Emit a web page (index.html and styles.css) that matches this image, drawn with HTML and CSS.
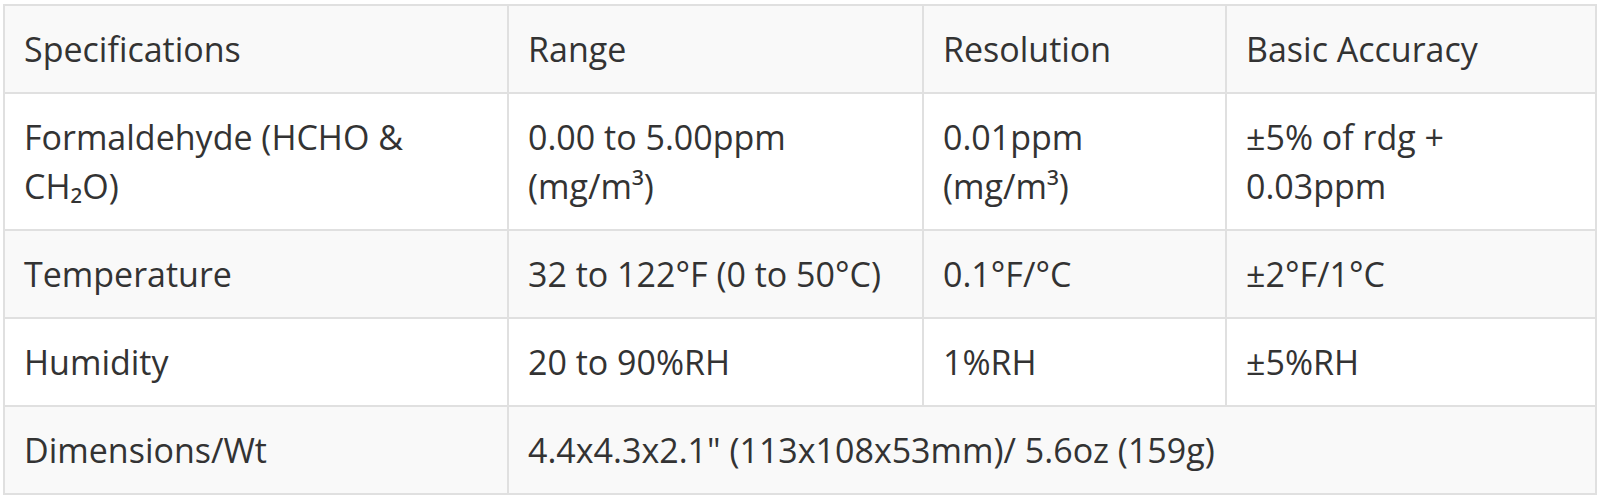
FILE: index.html
```html
<!DOCTYPE html>
<html>
<head>
<meta charset="utf-8">
<link rel="stylesheet" href="styles.css">
</head>
<body>
<table class="spec">
  <colgroup>
    <col class="c1"><col class="c2"><col class="c3"><col class="c4">
  </colgroup>
  <tr class="alt">
    <td>Specifications</td>
    <td>Range</td>
    <td>Resolution</td>
    <td>Basic Accuracy</td>
  </tr>
  <tr>
    <td>Formaldehyde (HCHO &amp; CH₂O)</td>
    <td>0.00 to 5.00ppm (mg/m³)</td>
    <td>0.01ppm (mg/m³)</td>
    <td>±5% of rdg + 0.03ppm</td>
  </tr>
  <tr class="alt">
    <td>Temperature</td>
    <td>32 to 122°F (0 to 50°C)</td>
    <td>0.1°F/°C</td>
    <td>±2°F/1°C</td>
  </tr>
  <tr>
    <td>Humidity</td>
    <td>20 to 90%RH</td>
    <td>1%RH</td>
    <td>±5%RH</td>
  </tr>
  <tr class="alt">
    <td>Dimensions/Wt</td>
    <td colspan="3">4.4x4.3x2.1" (113x108x53mm)/ 5.6oz (159g)</td>
  </tr>
</table>
</body>
</html>
```
FILE: styles.css
```css
html, body {
  margin: 0;
  padding: 0;
  background: #ffffff;
}
body {
  padding: 4px 3px 0 3px;
  font-family: "Open Sans", "Liberation Sans", sans-serif;
  color: #333333;
}
.spec {
  width: 100%;
  border-collapse: collapse;
  table-layout: fixed;
  font-size: 34px;
  line-height: 49px;
}
.c1 { width: 504px; }
.c2 { width: 415px; }
.c3 { width: 303px; }
.spec td {
  border: 2px solid #e0e0e0;
  padding: 18.5px 20px 18.5px 19px;
  vertical-align: top;
  text-align: left;
}
.spec tr.alt td {
  background: #f9f9f9;
}
```
